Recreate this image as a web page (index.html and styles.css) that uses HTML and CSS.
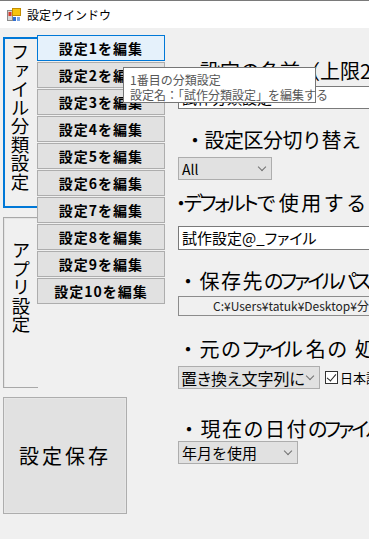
FILE: index.html
```html
<!DOCTYPE html>
<html lang="ja">
<head>
  <meta charset="UTF-8">
  <meta name="viewport" content="width=device-width, initial-scale=1.0">
  <title>設定ウインドウ</title>
  <link rel="stylesheet" href="styles.css">
</head>
<body>
  <div class="window">
    <div class="titlebar">
      <svg class="app-icon" width="14" height="14" viewBox="0 0 14 14">
        <rect x="0.5" y="2.5" width="5" height="10" fill="#d8d8d8" stroke="#8a8a8a"/>
        <rect x="1.5" y="4" width="3" height="4" fill="#d83a2e"/>
        <rect x="5.5" y="0.5" width="8" height="7" fill="#f6c40e" stroke="#c48d00"/>
        <rect x="6" y="9" width="3" height="4" fill="#2f6fd1"/>
        <rect x="10" y="9" width="3" height="4" fill="#79a6e8"/>
      </svg>
      <span class="title">設定ウインドウ</span>
    </div>

    <div class="client">
      <div class="left">
        <div class="tabarea">
          <div class="tabs">
            <div class="tab tab-active">ファイル分類設定</div>
            <div class="tab tab-app">アプリ設定</div>
          </div>
          <div class="editlist">
            <button class="edit edit-hot">設定1を編集</button>
            <button class="edit">設定2を編集</button>
            <button class="edit">設定3を編集</button>
            <button class="edit">設定4を編集</button>
            <button class="edit">設定5を編集</button>
            <button class="edit">設定6を編集</button>
            <button class="edit">設定7を編集</button>
            <button class="edit">設定8を編集</button>
            <button class="edit">設定9を編集</button>
            <button class="edit">設定10を編集</button>
          </div>
        </div>
        <button class="save">設定保存</button>
      </div>

      <div class="settings">
        <div class="label label-name">・設定の名前（上限20文字）</div>
        <div class="textbox">試作分類設定</div>

        <div class="label label-kind">・設定区分切り替え</div>
        <div class="combo combo-kind"><span>All</span><i class="chev"></i></div>

        <div class="label label-default"><span class="kt">・デフォルト</span>で使用する名前</div>
        <div class="textbox textbox-default">試作設定@_<span class="kt">ファイル</span></div>

        <div class="label label-path">・保存先<span class="kt">のファイルパス</span></div>
        <div class="pathbox">C:¥Users¥tatuk¥Desktop¥分類フォルダ</div>

        <div class="label label-orig">・元の<span class="kt">ファイル</span> 名の 処理</div>
        <div class="row">
          <div class="combo combo-replace"><span>置き換え文字列に</span><i class="chev"></i></div>
          <label class="check"><span class="box"></span>日本語を削除</label>
        </div>

        <div class="label label-date">・現在の日付<span class="kt">のファイル</span>名</div>
        <div class="combo combo-date"><span>年月を使用</span><i class="chev"></i></div>
      </div>

      <div class="tooltip">
        <div>1番目の分類設定</div>
        <div>設定名：「試作分類設定」を編集する</div>
      </div>
    </div>
  </div>
</body>
</html>
```

FILE: styles.css
```css
body {
  margin: 0;
  font-family: "Noto Sans CJK JP", "Noto Sans", sans-serif;
  color: #000;
  background: #f0f0f0;
}
.window {
  width: 369px;
  height: 539px;
  overflow: hidden;
  background: #f0f0f0;
}
.titlebar {
  height: 27px;
  border-top: 1px solid #7a7a7a;
  background: #fff;
  display: flex;
  align-items: center;
  padding-left: 7px;
  gap: 6px;
}
.title {
  font-size: 12px;
  line-height: 14px;
}
.client {
  position: relative;
  display: flex;
  padding: 7px 0 0 3px;
}
.left {
  width: 162px;
  flex: none;
  display: flex;
  flex-direction: column;
}
.tabarea {
  display: flex;
}
.tabs {
  width: 34px;
  flex: none;
  padding-top: 2px;
}
.tab {
  box-sizing: border-box;
  height: 171px;
  writing-mode: vertical-rl;
  text-orientation: upright;
  font-size: 18.5px;
  line-height: 34px;
}
.tab-active {
  border: 2px solid #0078d7;
  border-right: none;
  padding-top: 4px;
  width: 34px;
}
.tab-app {
  margin-top: 9px;
  width: 35px;
  border: 1px solid #a8a8a8;
  border-right: none;
  box-shadow: inset 1px 1px 0 #e4e4e4;
  padding-top: 23px;
}
.editlist {
  display: flex;
  flex-direction: column;
  gap: 1px;
}
.edit {
  width: 128px;
  height: 26px;
  padding: 0;
  border: 1px solid #adadad;
  background: #e1e1e1;
  font-family: inherit;
  font-size: 14px;
  font-weight: bold;
  letter-spacing: 1px;
  color: #000;
}
.edit-hot {
  background: #e5f1fb;
  border-color: #0078d7;
}
.save {
  margin-top: 9px;
  width: 124px;
  height: 117px;
  padding: 0;
  border: 1px solid #adadad;
  box-shadow: inset 0 0 0 1px #e6e6e6;
  background: #e1e1e1;
  font-family: inherit;
  font-size: 20px;
  letter-spacing: 3px;
  color: #000;
}
.settings {
  margin-left: 13px;
  display: flex;
  flex-direction: column;
  align-items: flex-start;
  white-space: nowrap;
}
.label {
  font-size: 20px;
  line-height: 24px;
  height: 24px;
}
.kt {
  font-feature-settings: "palt";
  letter-spacing: -3px;
}
.label-name { margin-top: 24px; margin-left: 2px; }
.label-kind { margin-top: 19px; margin-left: 7px; letter-spacing: -0.5px; }
.label-default { margin-top: 11px; margin-left: -2px; letter-spacing: 2.5px; }
.label-default .kt { letter-spacing: -2.5px; }
.label-path { margin-top: 19px; letter-spacing: 1.5px; }
.label-orig { margin-top: 21px; letter-spacing: 1.5px; }
.label-date { margin-top: 28px; margin-left: 1px; letter-spacing: 1.5px; }
.textbox {
  box-sizing: border-box;
  margin-top: 3px;
  width: 200px;
  height: 23px;
  border: 1px solid #7a7a7a;
  background: #fff;
  font-size: 15px;
  line-height: 21px;
  padding-left: 3px;
}
.textbox .kt {
  letter-spacing: 0;
}
.textbox-default {
  margin-top: 11px;
  height: 24px;
}
.pathbox {
  box-sizing: border-box;
  margin-top: 3px;
  width: 220px;
  height: 20px;
  border: 1px solid #8c8c8c;
  background: #f0f0f0;
  font-size: 12px;
  line-height: 18px;
  padding-left: 34px;
  color: #222;
}
.combo {
  box-sizing: border-box;
  height: 23px;
  border: 1px solid #adadad;
  background: #e1e1e1;
  display: flex;
  align-items: center;
  justify-content: space-between;
  padding: 0 6px 0 3px;
  font-size: 14px;
}
.combo-kind { margin-top: 5px; width: 94px; }
.combo-date { width: 120px; font-size: 15px; }
.combo-replace {
  width: 142px;
  font-size: 16px;
  font-feature-settings: "palt";
  padding-left: 2px;
}
.chev {
  width: 5px;
  height: 5px;
  border-right: 1px solid #707070;
  border-bottom: 1px solid #707070;
  transform: rotate(45deg);
  margin-top: -3px;
}
.row {
  margin-top: 5px;
  display: flex;
  align-items: center;
}
.check {
  display: flex;
  align-items: center;
  gap: 2px;
  margin-left: 5px;
  font-size: 13px;
}
.box {
  box-sizing: border-box;
  width: 13px;
  height: 13px;
  border: 1px solid #333;
  background: #fff;
  position: relative;
}
.box::after {
  content: "";
  position: absolute;
  left: 3px;
  top: 0;
  width: 4px;
  height: 8px;
  border-right: 1px solid #222;
  border-bottom: 1px solid #222;
  transform: rotate(40deg);
}
.tooltip {
  position: absolute;
  left: 123px;
  top: 39px;
  box-sizing: border-box;
  width: 193px;
  height: 36px;
  padding: 4px 6px 0;
  border: 1px solid #767676;
  background: #fff;
  color: #575757;
  font-size: 12px;
  line-height: 15px;
  white-space: nowrap;
}
```
